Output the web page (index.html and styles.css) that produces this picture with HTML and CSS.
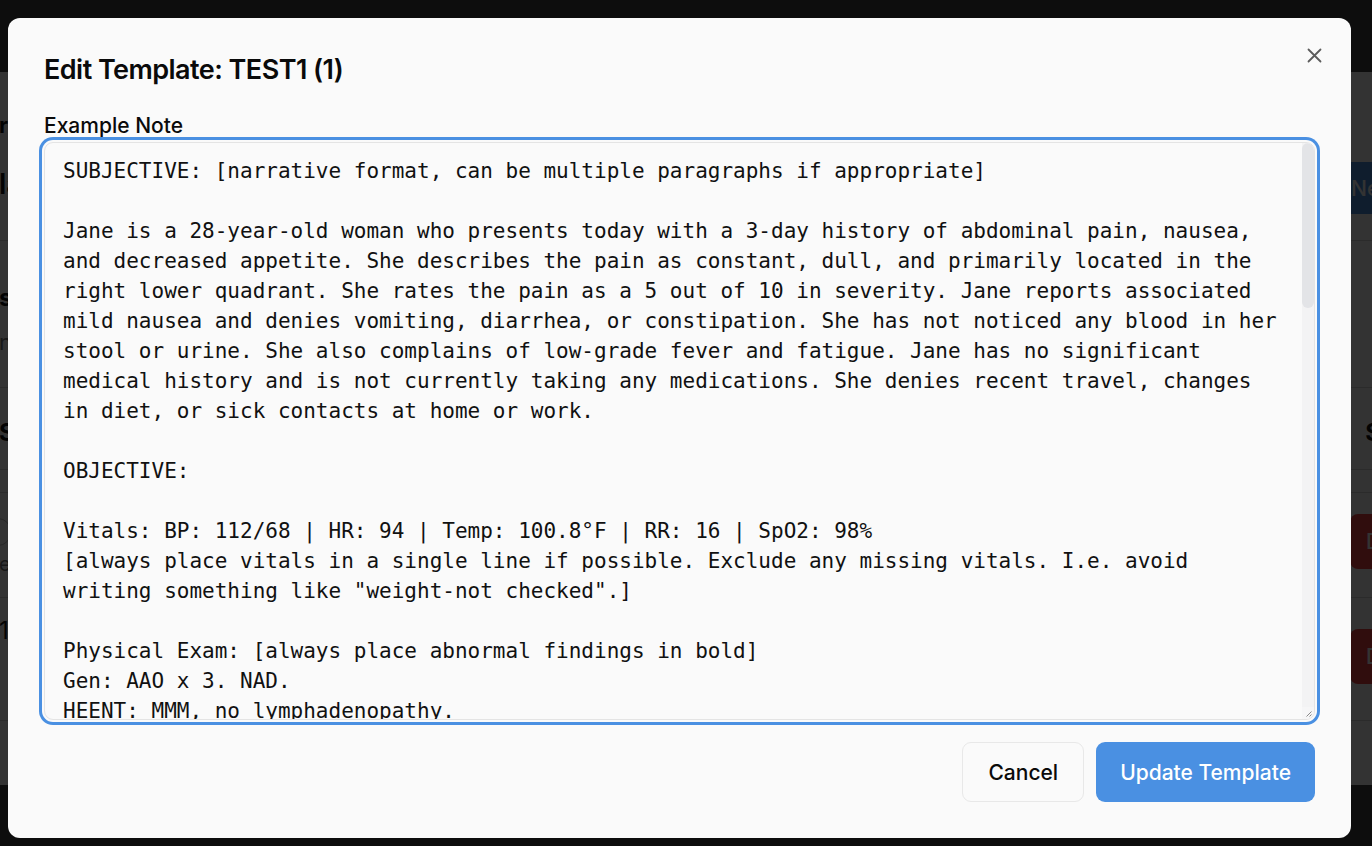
FILE: index.html
```html
<!DOCTYPE html>
<html lang="en">
<head>
<meta charset="utf-8">
<title>Edit Template</title>
<link rel="stylesheet" href="styles.css">
</head>
<body>
<div class="page">
  <header class="topbar"></header>
  <main class="content">
    <section class="band band-intro">
      <div class="intro-text">
        <h1 class="page-title">r</h1>
        <p class="page-sub">la</p>
      </div>
      <button class="btn-new">New</button>
    </section>
    <section class="band band-second">
      <h2 class="sec-title">s</h2>
      <p class="sec-muted">n</p>
    </section>
    <section class="band band-third">
      <h2 class="sec-title big">S</h2>
      <h2 class="sec-title big">S</h2>
    </section>
    <div class="band band-thin"></div>
    <section class="band row-a">
      <div class="row-left">
        <span class="pill"></span>
        <span class="row-muted">e</span>
      </div>
      <button class="btn-del">D</button>
    </section>
    <section class="band row-b">
      <span class="row-num">1</span>
      <button class="btn-del">D</button>
    </section>
  </main>
</div>
<div class="overlay"></div>

<div class="dialog" role="dialog" aria-labelledby="dlg-title">
  <h2 class="dialog-title" id="dlg-title">Edit Template: TEST1 (1)</h2>
  <button class="dialog-close" aria-label="Close">
    <svg width="15" height="15" viewBox="0 0 15 15" fill="none" stroke="currentColor" stroke-width="1.8" stroke-linecap="round"><path d="M1.5 1.5 13.5 13.5M13.5 1.5 1.5 13.5"/></svg>
  </button>
  <label class="field-label" for="example-note">Example Note</label>
  <div class="note-field">
    <textarea class="note" id="example-note" spellcheck="false">SUBJECTIVE: [narrative format, can be multiple paragraphs if appropriate]

Jane is a 28-year-old woman who presents today with a 3-day history of abdominal pain, nausea,
and decreased appetite. She describes the pain as constant, dull, and primarily located in the
right lower quadrant. She rates the pain as a 5 out of 10 in severity. Jane reports associated
mild nausea and denies vomiting, diarrhea, or constipation. She has not noticed any blood in her
stool or urine. She also complains of low-grade fever and fatigue. Jane has no significant
medical history and is not currently taking any medications. She denies recent travel, changes
in diet, or sick contacts at home or work.

OBJECTIVE:

Vitals: BP: 112/68 | HR: 94 | Temp: 100.8°F | RR: 16 | SpO2: 98%
[always place vitals in a single line if possible. Exclude any missing vitals. I.e. avoid
writing something like "weight-not checked".]

Physical Exam: [always place abnormal findings in bold]
Gen: AAO x 3. NAD.
HEENT: MMM, no lymphadenopathy.
CV: RRR, no murmurs, rubs, or gallops.
Lungs: CTAB, no wheezes, rales, or rhonchi.
Abdomen: Soft, tender to palpation in the right lower quadrant with mild guarding. No rebound
tenderness. Positive McBurney's point tenderness. Bowel sounds present.
Ext: No edema, cyanosis, or clubbing.
Skin: Warm and dry, no rashes.
Neuro: Grossly intact.

Labs: [include only results that are available]
CBC: WBC 13.2 (elevated), Hgb 13.1, Plt 245
CMP: Within normal limits
UA: Negative for blood, leukocytes, and nitrites
Urine hCG: Negative

ASSESSMENT AND PLAN: [organize by problem, with a short assessment and plan for each]

1. Right lower quadrant abdominal pain, concerning for acute appendicitis
- Clinical presentation with RLQ pain, low-grade fever, nausea, and leukocytosis is
concerning for acute appendicitis.
- Differential diagnosis includes ovarian cyst, ovarian torsion, ectopic pregnancy (ruled
out with negative hCG), mesenteric adenitis, and pelvic inflammatory disease.
- Order CT abdomen/pelvis with IV contrast.
- Surgical consult for evaluation.
- Keep NPO pending imaging and surgical evaluation.
- Start IV fluids: LR at 125 mL/hr.
- Ondansetron 4 mg IV q6h PRN nausea.
- Acetaminophen 1000 mg IV q6h PRN pain/fever.

2. Low-grade fever
- Likely secondary to the above.
- Monitor temperature q4h.
- Blood cultures if temperature rises above 101.5°F.

3. Nausea
- Management as above.

Disposition: [include where the patient is going and follow-up plan]
- Admit to surgical service pending imaging results.
- Patient and family updated on plan of care and agree.

Patient Education:
- Discussed signs and symptoms of appendicitis and possible need for surgery.
- Patient verbalized understanding and all questions were answered.

Follow-up:
- Reassess after CT imaging and surgical evaluation.</textarea>
    <div class="scroll-track" aria-hidden="true">
      <div class="scroll-thumb"></div>
      <div class="resizer">
        <svg width="7" height="7" viewBox="0 0 7 7" fill="none" stroke="#8a8a8a" stroke-width="1"><path d="M6.5 1.5 1.5 6.5M6.5 4.5 4.5 6.5"/></svg>
      </div>
    </div>
  </div>
  <div class="dialog-footer">
    <button class="btn btn-cancel">Cancel</button>
    <button class="btn btn-primary">Update Template</button>
  </div>
</div>
</body>
</html>
```

FILE: styles.css
```css
html, body {
  margin: 0;
  padding: 0;
}
body {
  width: 1372px;
  height: 846px;
  overflow: hidden;
  background: #444444;
  font-family: Inter, "Noto Sans", "Liberation Sans", sans-serif;
  position: relative;
}

/* ---------- underlying page (dimmed by overlay) ---------- */
.page {
  width: 1480px;
  margin-left: -1px;
  background: #ffffff;
  height: 785px;
}
.topbar {
  height: 72px;
  background: #444444;
}
.content {
  display: flex;
  flex-direction: column;
}
.band {
  box-sizing: border-box;
  border-bottom: 1px solid #d8d8d8;
  display: flex;
  justify-content: space-between;
  padding-right: 20px;
}
.band-intro {
  height: 169px;
  align-items: flex-end;
  padding-bottom: 26px;
}
.intro-text {
  align-self: flex-start;
  padding-top: 40px;
}
.page-title {
  margin: 0;
  font-size: 22px;
  line-height: 26px;
  font-weight: 700;
  color: #111;
  white-space: nowrap;
}
.page-sub {
  margin: 30px 0 0;
  font-size: 28px;
  line-height: 32px;
  font-weight: 600;
  color: #111;
}
.btn-new {
  height: 52px;
  width: 124px;
  padding: 0 0 0 16px;
  border: none;
  border-radius: 8px;
  background: #4a90e2;
  color: #fff;
  font: 500 21px Inter, sans-serif;
  text-align: left;
  white-space: nowrap;
}
.band-second {
  height: 147px;
  flex-direction: column;
  justify-content: flex-start;
  padding-top: 44px;
}
.sec-title {
  margin: 0;
  font-size: 24px;
  line-height: 26px;
  font-weight: 700;
  color: #111;
}
.sec-muted {
  margin: 18px 0 0;
  font-size: 22px;
  line-height: 26px;
  color: #777;
}
.band-third {
  height: 82px;
  align-items: center;
  padding-top: 8px;
  padding-right: 98px;
}
.band-thin {
  height: 23px;
}
.row-a {
  height: 105px;
  align-items: flex-start;
  padding-top: 21px;
  padding-right: 40px;
}
.row-left {
  display: flex;
  flex-direction: column;
  gap: 8px;
  margin-left: -30px;
  padding-top: 4px;
}
.pill {
  display: block;
  width: 40px;
  height: 26px;
  border: 1px solid #bbb;
  border-radius: 13px;
}
.row-muted {
  padding-left: 30px;
  font-size: 20px;
  line-height: 20px;
  color: #777;
}
.btn-del {
  height: 55px;
  width: 89px;
  padding: 0 0 0 16px;
  border: none;
  border-radius: 8px;
  background: #ef4444;
  color: #fff;
  font: 500 21px Inter, sans-serif;
  text-align: left;
  white-space: nowrap;
}
.row-b {
  height: 123px;
  align-items: flex-start;
  padding-top: 20px;
  padding-right: 40px;
}
.row-b .btn-del {
  margin-top: 11px;
}
.row-num {
  font-size: 24px;
  line-height: 26px;
  color: #111;
}

.overlay {
  position: absolute;
  inset: 0;
  background: rgba(0, 0, 0, 0.8);
}

/* ---------- dialog ---------- */
.dialog {
  position: absolute;
  left: 8px;
  top: 18px;
  width: 1343px;
  height: 820px;
  box-sizing: border-box;
  padding: 36px;
  background: #fafafa;
  border-radius: 12px;
  display: flex;
  flex-direction: column;
  color: #0a0a0a;
  font-family: Inter, "Noto Sans", "Liberation Sans", sans-serif;
}
.dialog-title {
  margin: 2px 0 0;
  font-size: 27px;
  line-height: 27px;
  font-weight: 600;
  letter-spacing: -0.02em;
}
.dialog-close {
  position: absolute;
  top: 30px;
  right: 29px;
  width: 15px;
  height: 15px;
  padding: 0;
  border: none;
  background: none;
  color: #5c5c5c;
  display: flex;
}
.field-label {
  margin-top: 32px;
  margin-bottom: 6px;
  font-size: 21px;
  line-height: 21px;
  font-weight: 500;
}
.note-field {
  display: flex;
  height: 578px;
  box-sizing: border-box;
  border: 1px solid #e4e4e4;
  border-radius: 9px;
  background: #fafafa;
  box-shadow: 0 0 0 2px #fafafa, 0 0 0 5px #4a90e2;
  overflow: hidden;
}
.note {
  flex: 1;
  min-width: 0;
  display: block;
  margin: 0;
  padding: 13px 18px 0;
  border: none;
  background: transparent;
  outline: none;
  resize: none;
  overflow: hidden;
  font-family: "DejaVu Sans Mono", "Liberation Mono", monospace;
  font-size: 21px;
  line-height: 30px;
  color: #111;
}
.scroll-track {
  width: 12px;
  flex: none;
  display: flex;
  flex-direction: column;
  background: #f3f3f4;
}
.scroll-thumb {
  height: 165px;
  background: #e3e4e7;
  border-radius: 6px;
}
.resizer {
  margin-top: auto;
  height: 12px;
  display: flex;
  align-items: center;
  justify-content: center;
  background: #f6f6f7;
}
.dialog-footer {
  margin-top: 22px;
  display: flex;
  justify-content: flex-end;
  gap: 12px;
}
.btn {
  height: 60px;
  padding: 0 25px;
  border-radius: 9px;
  font-family: Inter, "Noto Sans", sans-serif;
  font-size: 21px;
  font-weight: 500;
}
.btn-cancel {
  background: #fafafa;
  border: 1px solid #e8e8e8;
  color: #0a0a0a;
}
.btn-primary {
  background: #4a90e2;
  border: none;
  color: #ffffff;
  padding: 0 24px;
}
```
